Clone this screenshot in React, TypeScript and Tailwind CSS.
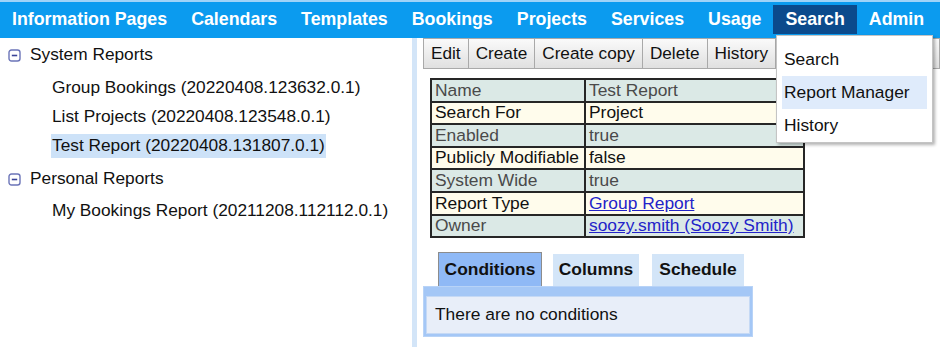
import React from "react";

const navItems = [
  "Information Pages",
  "Calendars",
  "Templates",
  "Bookings",
  "Projects",
  "Services",
  "Usage",
  "Search",
  "Admin",
];

const rows: { label: string; value: string; link?: boolean }[] = [
  { label: "Name", value: "Test Report" },
  { label: "Search For", value: "Project" },
  { label: "Enabled", value: "true" },
  { label: "Publicly Modifiable", value: "false" },
  { label: "System Wide", value: "true" },
  { label: "Report Type", value: "Group Report", link: true },
  { label: "Owner", value: "soozy.smith (Soozy Smith)", link: true },
];

const buttons = ["Edit", "Create", "Create copy", "Delete", "History", "Run", "Export", "Filter"];

function MinusBox() {
  return (
    <svg width="13" height="13" viewBox="0 0 13 13" className="shrink-0">
      <rect x="1" y="1" width="11" height="11" rx="2.5" fill="#fff" stroke="#6b74b8" strokeWidth="1.4" />
      <line x1="3.8" y1="6.5" x2="9.2" y2="6.5" stroke="#3b4498" strokeWidth="1.6" />
    </svg>
  );
}

export default function App() {
  return (
    <div
      className="relative w-[940px] h-[347px] overflow-hidden bg-white text-[#111]"
      style={{ fontFamily: '"Liberation Sans", Arial, sans-serif' }}
    >
      {/* Top navigation */}
      <div className="flex h-[38px] border-t-2 border-[#9fd3f8] bg-[#0b9bef] pt-[3px]">
        {navItems.map((item) => (
          <div
            key={item}
            className={`h-[29px] px-3 flex items-center text-[17.8px] font-bold text-white leading-none whitespace-nowrap shrink-0 ${
              item === "Search" ? "bg-[#0b4a8c]" : ""
            }`}
          >
            {item}
          </div>
        ))}
      </div>

      {/* Body */}
      <div className="flex h-[309px]">
        {/* Left tree */}
        <div className="w-[412px] shrink-0 pt-[5px] text-[17.3px] leading-none">
          <div className="flex items-center h-[24px] pl-[8px] gap-[9px]">
            <MinusBox />
            <span>System Reports</span>
          </div>
          <div className="flex flex-col gap-[5px] mt-[9px] pl-[51px]">
            <div className="h-[24px] flex items-center px-[1px] whitespace-nowrap">Group Bookings (20220408.123632.0.1)</div>
            <div className="h-[24px] flex items-center px-[1px] whitespace-nowrap">List Projects (20220408.123548.0.1)</div>
            <div className="h-[24px] flex items-center px-[1px] bg-[#cde2f8] self-start whitespace-nowrap">
              Test Report (20220408.131807.0.1)
            </div>
          </div>
          <div className="flex items-center h-[24px] pl-[8px] gap-[9px] mt-[9px]">
            <MinusBox />
            <span>Personal Reports</span>
          </div>
          <div className="flex flex-col mt-[8px] pl-[51px]">
            <div className="h-[24px] flex items-center px-[1px] whitespace-nowrap">My Bookings Report (20211208.112112.0.1)</div>
          </div>
        </div>

        {/* Splitter */}
        <div className="w-[5px] shrink-0 bg-[#d3e5f8]" />

        {/* Right content */}
        <div className="ml-[6px] flex-1 min-w-0">
          {/* Toolbar */}
          <div className="flex h-[31px]">
            {buttons.map((b, i) => (
              <div
                key={b}
                className={`h-[31px] px-[7px] shrink-0 flex items-center border border-[#a9a9a9] bg-gradient-to-b from-[#fafafa] to-[#e0e0e0] text-[17.2px] leading-none whitespace-nowrap text-[#111] ${
                  i > 0 ? "-ml-px" : ""
                }`}
              >
                {b}
              </div>
            ))}
          </div>

          {/* Properties table */}
          <div className="ml-[7px] mt-[9px] w-[375px] border-2 border-[#262626] text-[17.4px] leading-none">
            {rows.map((r, i) => (
              <div
                key={r.label}
                className={`flex h-[20.6px] ${i > 0 ? "border-t-2 border-[#262626] box-content" : ""} ${
                  i % 2 === 0 ? "bg-[#dbe9e6] text-[#4a4a4a]" : "bg-[#fffcec] text-[#111]"
                }`}
              >
                <div className="w-[152px] px-[3px] flex items-center whitespace-nowrap">{r.label}</div>
                <div className="flex-1 border-l-2 border-[#262626] px-[3px] flex items-center whitespace-nowrap">
                  {r.link ? <span className="text-[#2323c9] underline">{r.value}</span> : r.value}
                </div>
              </div>
            ))}
          </div>

          {/* Tabs */}
          <div className="flex items-end ml-[15px] mt-[14px] h-[34px]">
            <div className="w-[104px] h-[34px] flex items-center justify-center bg-[#8fb9f6] border border-b-0 border-[#8c8c8c] font-bold text-[17.4px] leading-none">
              Conditions
            </div>
            <div className="ml-[11px] w-[86px] h-[32px] flex items-center justify-center bg-[#d3e5f8] font-bold text-[17.4px] leading-none">
              Columns
            </div>
            <div className="ml-[13px] w-[92px] h-[32px] flex items-center justify-center bg-[#d3e5f8] font-bold text-[17.4px] leading-none">
              Schedule
            </div>
          </div>
          <div className="w-[330px] bg-[#a4c7f6] pt-[9px] px-[2px] pb-[2px] border border-[#b8d3f7]">
            <div className="h-[38px] bg-[#e8eef9] border border-[#c5d9f5] flex items-center px-[8px] text-[17.4px] leading-none">
              There are no conditions
            </div>
          </div>
        </div>
      </div>

      {/* Dropdown menu under Search */}
      <div className="absolute left-[776px] top-[35px] w-[157px] h-[108px] bg-white border border-[#c4c4c4] shadow-[2px_2px_3px_rgba(0,0,0,0.3)] pt-[7px] px-[5px] text-[17.4px] leading-none">
        <div className="h-[33px] flex items-center px-[2px]">Search</div>
        <div className="h-[33px] flex items-center px-[2px] bg-[#dfebfb]">Report Manager</div>
        <div className="h-[33px] flex items-center px-[2px]">History</div>
      </div>
    </div>
  );
}
